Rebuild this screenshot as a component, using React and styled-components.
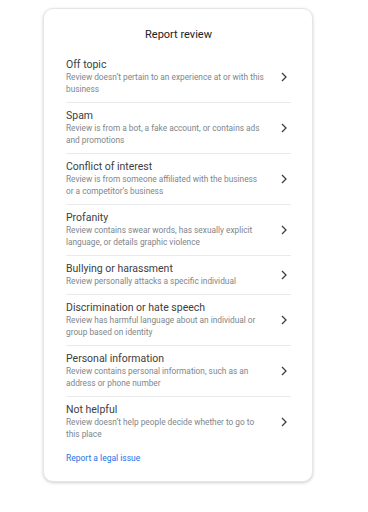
import React from 'react';
import styled, { createGlobalStyle } from 'styled-components';

const GlobalStyle = createGlobalStyle`
  body {
    margin: 0;
    background: #ffffff;
    font-family: Roboto, "Liberation Sans", Arial, sans-serif;
  }
`;

const Page = styled.div`
  width: 368px;
  height: 512px;
  padding: 8px 0 0 43px;
  box-sizing: border-box;
`;

const Card = styled.div`
  width: 270px;
  box-sizing: border-box;
  border-radius: 10px;
  border: 1px solid #e6e6e6;
  box-shadow: 0 1px 3px rgba(60, 64, 67, 0.25);
  padding: 19px 21px 17px 22px;
  background: #fff;
`;

const Title = styled.div`
  text-align: center;
  font-size: 11px;
  line-height: 14px;
  color: #202124;
  margin-bottom: 10px;
`;

const List = styled.div`
  display: flex;
  flex-direction: column;
`;

const Item = styled.div`
  display: flex;
  align-items: center;
  padding: 6px 0 7px;
  border-bottom: ${({ last }) => (last ? 'none' : '1px solid #e8eaed')};
  cursor: pointer;
`;

const ItemText = styled.div`
  flex: 1;
  padding-right: 16px;
`;

const ItemTitle = styled.div`
  font-size: 10.5px;
  line-height: 13px;
  color: #3c4043;
`;

const ItemDesc = styled.div`
  font-size: 8.3px;
  line-height: 12px;
  color: #80868b;
`;

const Chevron = styled.svg`
  width: 6px;
  height: 10px;
  margin-right: 4px;
  flex-shrink: 0;
`;

const LegalLink = styled.a`
  display: block;
  margin-top: 5px;
  font-size: 8.5px;
  line-height: 12px;
  color: #1a73e8;
  text-decoration: none;
`;

const reasons = [
  ['Off topic', 'Review doesn\u2019t pertain to an experience at or with this business'],
  ['Spam', 'Review is from a bot, a fake account, or contains ads and promotions'],
  ['Conflict of interest', 'Review is from someone affiliated with the business or a competitor\u2019s business'],
  ['Profanity', 'Review contains swear words, has sexually explicit language, or details graphic violence'],
  ['Bullying or harassment', 'Review personally attacks a specific individual'],
  ['Discrimination or hate speech', 'Review has harmful language about an individual or group based on identity'],
  ['Personal information', 'Review contains personal information, such as an address or phone number'],
  ['Not helpful', 'Review doesn\u2019t help people decide whether to go to this place'],
];

const App = () => {
  return (
    <Page>
      <GlobalStyle />
      <Card>
        <Title>Report review</Title>
        <List>
          {reasons.map(([title, desc], i) => (
            <Item key={title} last={i === reasons.length - 1}>
              <ItemText>
                <ItemTitle>{title}</ItemTitle>
                <ItemDesc>{desc}</ItemDesc>
              </ItemText>
              <Chevron viewBox="0 0 6 10">
                <path d="M1 1l4 4-4 4" fill="none" stroke="#3c4043" strokeWidth="1.3" />
              </Chevron>
            </Item>
          ))}
        </List>
        <LegalLink href="#">Report a legal issue</LegalLink>
      </Card>
    </Page>
  );
};

export default App;
